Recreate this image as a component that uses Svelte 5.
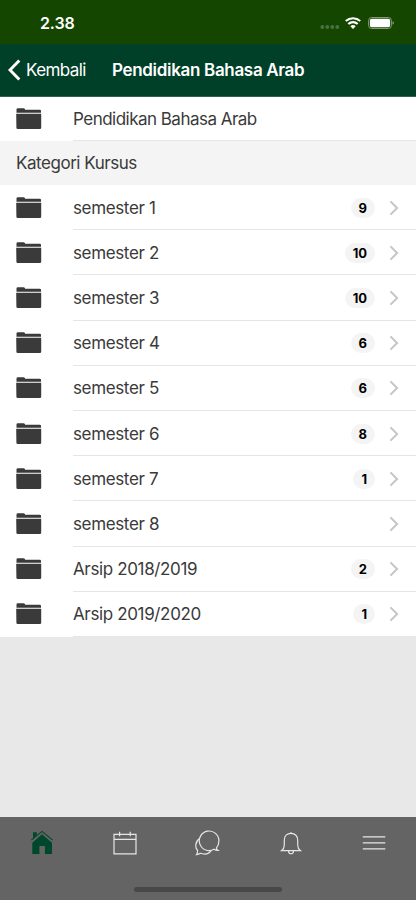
<script>
  const title = 'Pendidikan Bahasa Arab';

  const categories = [
    { name: 'semester 1', count: 9 },
    { name: 'semester 2', count: 10 },
    { name: 'semester 3', count: 10 },
    { name: 'semester 4', count: 6 },
    { name: 'semester 5', count: 6 },
    { name: 'semester 6', count: 8 },
    { name: 'semester 7', count: 1 },
    { name: 'semester 8', count: 0 },
    { name: 'Arsip 2018/2019', count: 2 },
    { name: 'Arsip 2019/2020', count: 1 }
  ];
</script>

{#snippet folder()}
  <svg class="folder" viewBox="0 0 26 22" aria-hidden="true">
    <path d="M.5 4.7V1.6Q.5.3 1.8.3H7.6Q8.6.3 9 1.2T10.3 1.8H23.8Q25 1.8 25 3V4.7Z" />
    <path d="M.2 5.8H25.2V19.8Q25.2 21.1 23.9 21.1H1.7Q.4 21.1.4 19.8Z" />
  </svg>
{/snippet}

<div class="screen">
  <div class="status">
    <span class="time">2.38</span>
    <div class="indicators">
      <svg class="dots" width="20" height="6" viewBox="0 0 20 6">
        <circle cx="2.3" cy="3" r="1.9" />
        <circle cx="7.3" cy="3" r="1.9" />
        <circle cx="12.3" cy="3" r="1.9" />
        <circle cx="17.3" cy="3" r="1.9" />
      </svg>
      <svg class="wifi" width="16" height="12" viewBox="0 0 16 12">
        <path d="M.8 4.1C4.9.3 11.1.3 15.2 4.1M3.3 7C6 4.5 10 4.5 12.7 7" />
        <path class="solid" d="M5.3 9.2Q8 6.9 10.7 9.2L8 12Z" />
      </svg>
      <svg class="battery" width="27" height="12" viewBox="0 0 27 12">
        <rect class="shell" x=".6" y=".5" width="22.8" height="11" rx="3" />
        <rect x="1.9" y="1.8" width="20.2" height="8.5" rx="1.7" />
        <path class="cap" d="M24.5 4.2Q26 4.7 26 6T24.5 7.8Z" />
      </svg>
    </div>
  </div>

  <header class="toolbar">
    <button class="back">
      <svg width="13" height="22" viewBox="0 0 13 22"><path d="M11.3 1.5 2 11l9.3 9.5" /></svg>
      <span>Kembali</span>
    </button>
    <h1>{title}</h1>
  </header>

  <main>
    <div class="item heading">
      {@render folder()}
      <div class="inner"><span class="label">{title}</span></div>
    </div>
    <div class="divider">Kategori Kursus</div>
    <div class="list">
      {#each categories as category}
        <div class="item">
          {@render folder()}
          <div class="inner">
            <span class="label">{category.name}</span>
            {#if category.count}
              <span class="badge">{category.count}</span>
            {/if}
            <svg class="chevron" width="10" height="16" viewBox="0 0 10 16"><path d="m1.5 1.4 6.6 6.6-6.6 6.6" /></svg>
          </div>
        </div>
      {/each}
    </div>
  </main>

  <nav class="tabs">
    <button class="tab active" aria-label="Home">
      <svg viewBox="0 0 26 26">
        <path d="M4 2.2H7.8V5.2L4 8.7Z" />
        <path d="M13 4.3 23 12.8V24H15.9V16H10.4V24H3.3V12.8Z" />
        <path class="roof" d="M2.3 10.2 13 1.4 23.7 10.2" />
      </svg>
    </button>
    <button class="tab" aria-label="Calendar">
      <svg viewBox="0 0 26 26"><path d="M2 4.3H24V23.9H2ZM2 9.3H24M7.6 1.7V6.2M18.2 1.7V6.2" /></svg>
    </button>
    <button class="tab" aria-label="Messages">
      <svg viewBox="0 0 26 26">
        <path d="M21.3 18.2Q23.9 15.1 23.9 11A9.8 9.8 0 1 0 19 19.3Q20.7 20.5 23.1 20.4 21.6 19.5 21.3 18.2Z" />
        <path d="M4.6 8.6C-.1 11.8 0 18 2.5 20.2Q2.8 22.9 1.5 24.6 3.8 24.4 5.3 23.3C9.2 24.5 14 24.2 16.2 20.4" />
      </svg>
    </button>
    <button class="tab" aria-label="Notifications">
      <svg viewBox="0 0 26 26">
        <path d="M3.7 20.6H22.3Q19.8 18.8 19.7 15V10.2C19.7 6.1 17.1 3.3 13 3.3S6.3 6.1 6.3 10.2V15Q6.2 18.8 3.7 20.6ZM10.6 21.2C10.6 24.6 15.4 24.6 15.4 21.2M13 1.9V3.3" />
      </svg>
    </button>
    <button class="tab" aria-label="More">
      <svg viewBox="0 0 26 26"><path d="M1.8 6.9H24.3M1.8 12.9H24.3M1.8 18.9H24.3" /></svg>
    </button>
    <div class="home-bar"></div>
  </nav>
</div>

<style>
  :global(body) {
    margin: 0;
  }

  .screen {
    display: flex;
    flex-direction: column;
    width: 416px;
    height: 900px;
    overflow: hidden;
    background: #e8e8e8;
    color: #3a3a3a;
    font-family: Inter, 'Liberation Sans', sans-serif;
    font-size: 17px;
  }

  svg {
    display: block;
    flex: none;
  }

  button {
    padding: 0;
    border: 0;
    background: none;
    color: inherit;
    font: inherit;
  }

  .status {
    display: flex;
    align-items: center;
    justify-content: space-between;
    flex: none;
    box-sizing: border-box;
    height: 44px;
    padding: 2px 21px 0 40px;
    background: #144600;
    color: #fff;
  }
  .time {
    font-size: 16px;
    font-weight: 600;
    letter-spacing: -0.1px;
  }
  .indicators {
    display: flex;
    align-items: center;
    fill: #fff;
  }
  .dots {
    margin: 7px 5px 0 0;
    fill: #4b713e;
  }
  .wifi {
    margin-right: 7px;
    fill: none;
    stroke: #fff;
    stroke-width: 2.1;
  }
  .wifi .solid {
    fill: #fff;
    stroke: none;
  }
  .battery .shell {
    fill: none;
    stroke: #7f9c75;
  }
  .battery .cap {
    fill: #7f9c75;
  }

  .toolbar {
    display: flex;
    align-items: center;
    flex: none;
    box-sizing: border-box;
    height: 53px;
    padding-left: 8px;
    background: #003f28;
    border-bottom: 1px solid #305f4d;
    color: #fff;
  }
  .back {
    display: flex;
    align-items: center;
    gap: 5px;
    width: 104px;
    letter-spacing: -0.6px;
  }
  .back svg {
    fill: none;
    stroke: #fff;
    stroke-width: 3;
  }
  h1 {
    margin: 0;
    font-size: 17px;
    font-weight: 600;
    letter-spacing: -0.32px;
    white-space: nowrap;
  }

  main {
    flex: 1;
  }
  .item {
    display: flex;
    align-items: center;
    height: 45.2px;
    padding-left: 16px;
    background: #fff;
  }
  .heading {
    height: 44px;
  }
  .folder {
    width: 26px;
    height: 22px;
    margin-right: 31px;
    fill: #3a3a3a;
  }
  .inner {
    display: flex;
    align-items: center;
    flex: 1;
    box-sizing: border-box;
    height: 100%;
    padding: 1px 17px 0 0;
    border-bottom: 1px solid #e6e6e6;
  }
  .label {
    flex: 1;
    letter-spacing: -0.36px;
  }
  .heading .inner {
    padding-top: 0;
  }
  .heading .label {
    letter-spacing: -0.52px;
  }
  .divider {
    height: 44px;
    padding-left: 16px;
    background: #f4f4f4;
    line-height: 44px;
    letter-spacing: -0.46px;
  }
  .badge {
    padding: 2px 8px;
    border-radius: 10px;
    background: #f4f4f4;
    color: #000;
    font-size: 13px;
    font-weight: 700;
    line-height: 16px;
    text-align: center;
  }
  .chevron {
    margin-left: 14px;
    fill: none;
    stroke: #c5c5c8;
    stroke-width: 2;
  }

  .tabs {
    position: relative;
    display: flex;
    flex: none;
    height: 83px;
    background: #646464;
  }
  .tab {
    display: flex;
    justify-content: center;
    flex: 1;
    height: 52px;
    padding-top: 13px;
  }
  .tab svg {
    width: 26px;
    height: 26px;
    fill: none;
    stroke: #e6e6e6;
    stroke-width: 1.2;
  }
  .tab.active svg {
    fill: #00482c;
    stroke: none;
  }
  .tab .roof {
    fill: none;
    stroke: #00482c;
    stroke-width: 1.1;
  }
  .home-bar {
    position: absolute;
    bottom: 8px;
    left: 134px;
    width: 148px;
    height: 5px;
    border-radius: 3px;
    background: #484848;
  }
</style>
